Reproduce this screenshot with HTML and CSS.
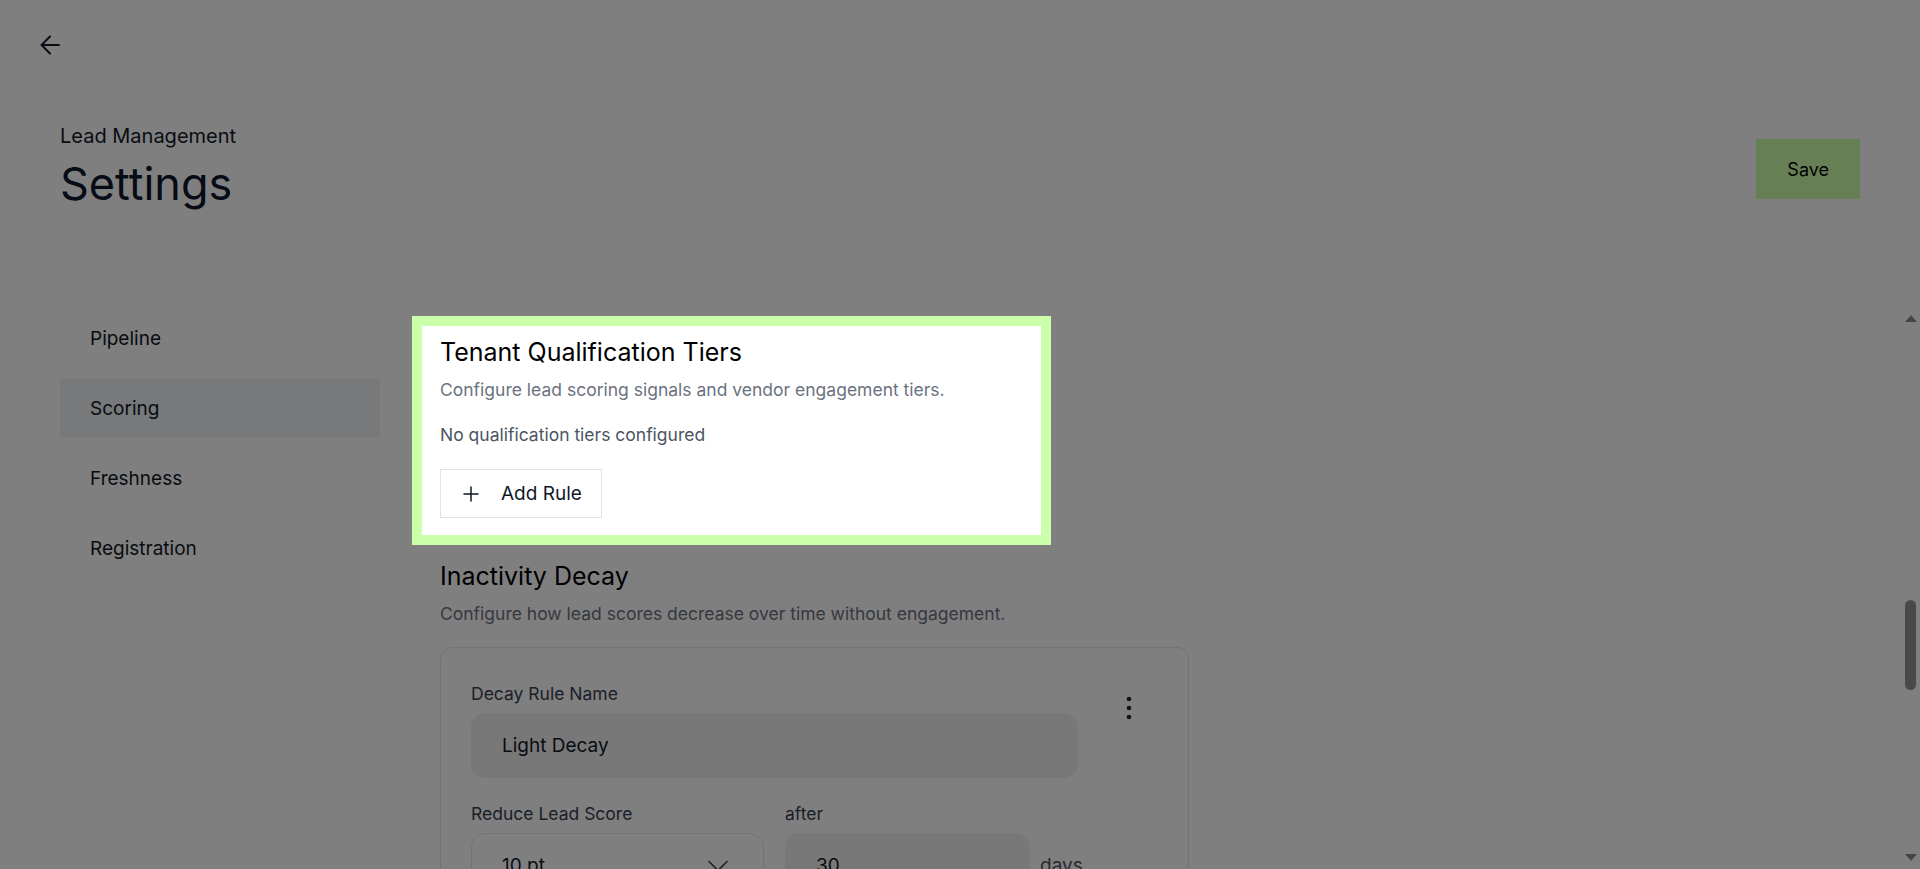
FILE: index.html
```html
<!DOCTYPE html>
<html lang="en">
<head>
<meta charset="utf-8">
<title>Lead Management · Settings</title>
<link rel="stylesheet" href="styles.css">
</head>
<body>
<div class="app">
  <header class="topbar">
    <button class="icon-btn back" aria-label="Back">
      <svg width="20" height="20" viewBox="0 0 20 20" fill="none" stroke="#111827" stroke-width="2" stroke-linecap="round" stroke-linejoin="round"><path d="M19 10H1.5M10 1.5 1.5 10 10 18.5"/></svg>
    </button>
  </header>

  <div class="page-head">
    <div class="page-heading">
      <div class="eyebrow">Lead Management</div>
      <h1 class="page-title">Settings</h1>
    </div>
    <button class="btn-save">Save</button>
  </div>

  <div class="layout">
    <nav class="side-nav">
      <a class="nav-item" href="#">Pipeline</a>
      <a class="nav-item active" href="#">Scoring</a>
      <a class="nav-item" href="#">Freshness</a>
      <a class="nav-item" href="#">Registration</a>
    </nav>

    <main class="pane">
      <div class="pane-inner">

        <section class="section" id="qualification-tiers">
          <h2 class="section-title">Tenant Qualification Tiers</h2>
          <p class="section-desc">Configure lead scoring signals and vendor engagement tiers.</p>
          <p class="empty-note">No qualification tiers configured</p>
          <button class="btn-add"><svg width="16" height="16" viewBox="0 0 16 16" fill="none" stroke="#111827" stroke-width="1.5" stroke-linecap="round"><path d="M8 1v14M1 8h14"/></svg><span>Add Rule</span></button>
        </section>

        <section class="section">
          <h2 class="section-title">Inactivity Decay</h2>
          <p class="section-desc">Configure how lead scores decrease over time without engagement.</p>
          <div class="rule-list">
            <div class="rule-card">
              <div class="rule-head">
                <div class="field"><label class="field-label">Decay Rule Name</label><div class="control filled">Light Decay</div></div>
                <button class="icon-btn kebab" aria-label="More"><svg width="24" height="24" viewBox="0 0 24 24" fill="#1f2937"><circle cx="12" cy="3" r="2.3"/><circle cx="12" cy="12" r="2.3"/><circle cx="12" cy="21" r="2.3"/></svg></button>
              </div>
              <div class="rule-row">
                <div class="field field-select"><label class="field-label">Reduce Lead Score</label><div class="control select"><span>10 pt</span><svg width="20" height="12" viewBox="0 0 20 12" fill="none" stroke="#374151" stroke-width="1.6" stroke-linecap="round" stroke-linejoin="round"><path d="M1 1.5 10 10.5 19 1.5"/></svg></div></div>
                <div class="field field-num"><label class="field-label">after</label><div class="control filled">30</div></div>
                <span class="unit">days</span>
              </div>
            </div>
          </div>
        </section>

      </div>
    </main>

    <div class="scrollbar" aria-hidden="true">
      <span class="scroll-arrow up"></span>
      <span class="scroll-track"><span class="scroll-thumb"></span></span>
      <span class="scroll-arrow down"></span>
    </div>
  </div>
</div>

<div class="spotlight" aria-hidden="true"></div>
</body>
</html>
```

FILE: styles.css
```css
* {
  box-sizing: border-box;
}

html,
body {
  height: 100%;
}

body {
  margin: 0;
  font-family: Inter, "Noto Sans", "Liberation Sans", sans-serif;
  color: #111827;
  background: #ffffff;
  overflow: hidden;
}

button {
  font: inherit;
  color: inherit;
  cursor: pointer;
}

.app {
  height: 100vh;
  display: flex;
  flex-direction: column;
}

/* top bar with back arrow */
.topbar {
  flex-shrink: 0;
  padding: 35px 40px 0;
}

.icon-btn {
  display: block;
  padding: 0;
  border: 0;
  background: none;
}

.back svg {
  display: block;
}

/* page heading + save */
.page-head {
  flex-shrink: 0;
  margin-top: 67px;
  padding: 0 60px;
  display: flex;
  justify-content: space-between;
  align-items: flex-start;
}

.eyebrow {
  font-size: 20px;
  line-height: 28px;
  color: #111827;
}

.page-title {
  margin: 8px 0 0;
  font-size: 45px;
  line-height: 52px;
  font-weight: 400;
  color: #0f172a;
}

.btn-save {
  margin-top: 17px;
  height: 60px;
  padding: 0 31px;
  border: 0;
  background: #ccffaa;
  font-size: 18px;
  color: #000000;
}

/* nav + settings pane */
.layout {
  position: relative;
  flex: 1;
  min-height: 0;
  margin-top: 98px;
  display: flex;
}

.side-nav {
  flex-shrink: 0;
  width: 320px;
  margin-left: 60px;
  display: flex;
  flex-direction: column;
  gap: 10px;
}

.nav-item {
  height: 60px;
  padding-left: 30px;
  display: flex;
  align-items: center;
  font-size: 19px;
  color: #111827;
  text-decoration: none;
}

.nav-item.active {
  background: #f0f2f5;
}

.pane {
  flex: 1;
  min-width: 0;
  overflow: hidden;
  padding: 28px 60px 0;
}

.pane-inner {
  width: 749px;
}

/* pane scrollbar */
.scrollbar {
  position: absolute;
  top: 0;
  right: 2px;
  bottom: 2px;
  width: 15px;
  display: flex;
  flex-direction: column;
  align-items: center;
}

.scroll-arrow {
  flex-shrink: 0;
  height: 20px;
  width: 15px;
  display: flex;
  align-items: center;
  justify-content: center;
}

.scroll-arrow::before {
  content: "";
  width: 0;
  height: 0;
  border-left: 6px solid transparent;
  border-right: 6px solid transparent;
}

.scroll-arrow.up::before {
  border-bottom: 7px solid #8a8a8a;
}

.scroll-arrow.down::before {
  border-top: 7px solid #8a8a8a;
}

.scroll-track {
  flex: 1;
  width: 100%;
  display: flex;
  justify-content: center;
}

.scroll-thumb {
  width: 11px;
  height: 90px;
  margin-top: 272px;
  border-radius: 6px;
  background: #929292;
}

/* settings sections */
.section + .section {
  margin-top: 42px;
}

.section-title {
  margin: 0;
  font-size: 25px;
  line-height: 32px;
  font-weight: 400;
  color: #000000;
}

.section-desc {
  margin: 10px 0 0;
  font-size: 17.5px;
  line-height: 24px;
  color: #6b7280;
}

.empty-note {
  margin: 21px 0 0;
  font-size: 17.5px;
  line-height: 24px;
  color: #4b5563;
}

.btn-add {
  margin-top: 22px;
  height: 49px;
  padding: 0 19px 0 22px;
  display: inline-flex;
  align-items: center;
  gap: 22px;
  border: 1px solid #e2e2e2;
  background: #ffffff;
  font-size: 19px;
  color: #111827;
}

.btn-add svg {
  display: block;
}

/* rule cards */
.rule-list {
  margin-top: 21px;
  display: flex;
  flex-direction: column;
  gap: 16px;
}

.rule-card {
  border: 1px solid #e5e7eb;
  border-radius: 12px;
  padding: 34px 39px 34px 30px;
}

.rule-head {
  display: flex;
  align-items: flex-start;
  gap: 31px;
}

.rule-head .field {
  flex: 1;
}

.kebab {
  width: 40px;
  height: 40px;
  margin-top: 6px;
  display: flex;
  align-items: center;
  justify-content: center;
}

.field-label {
  display: block;
  font-size: 17.5px;
  line-height: 24px;
  color: #374151;
}

.control {
  margin-top: 7px;
  height: 65px;
  border-radius: 14px;
  display: flex;
  align-items: center;
  font-size: 19px;
  color: #111827;
}

.control.filled {
  background: #f1f1f1;
  padding: 0 31px;
}

.control.select {
  border: 1px solid #e5e7eb;
  background: #ffffff;
  padding: 0 35px 0 30px;
  justify-content: space-between;
}

.rule-row {
  margin-top: 24px;
  display: flex;
  align-items: flex-end;
  gap: 21px;
}

.field-select {
  width: 293px;
}

.field-num {
  width: 245px;
}

.unit {
  height: 65px;
  margin-left: -11px;
  display: flex;
  align-items: center;
  font-size: 19px;
  color: #4b5563;
}

/* guided-tour spotlight around the highlighted section */
.spotlight {
  position: fixed;
  left: 412px;
  top: 316px;
  width: 639px;
  height: 229px;
  border: 10px solid #ccffaa;
  box-shadow: 0 0 0 4000px rgba(0, 0, 0, 0.5);
  pointer-events: none;
  z-index: 100;
}
```
